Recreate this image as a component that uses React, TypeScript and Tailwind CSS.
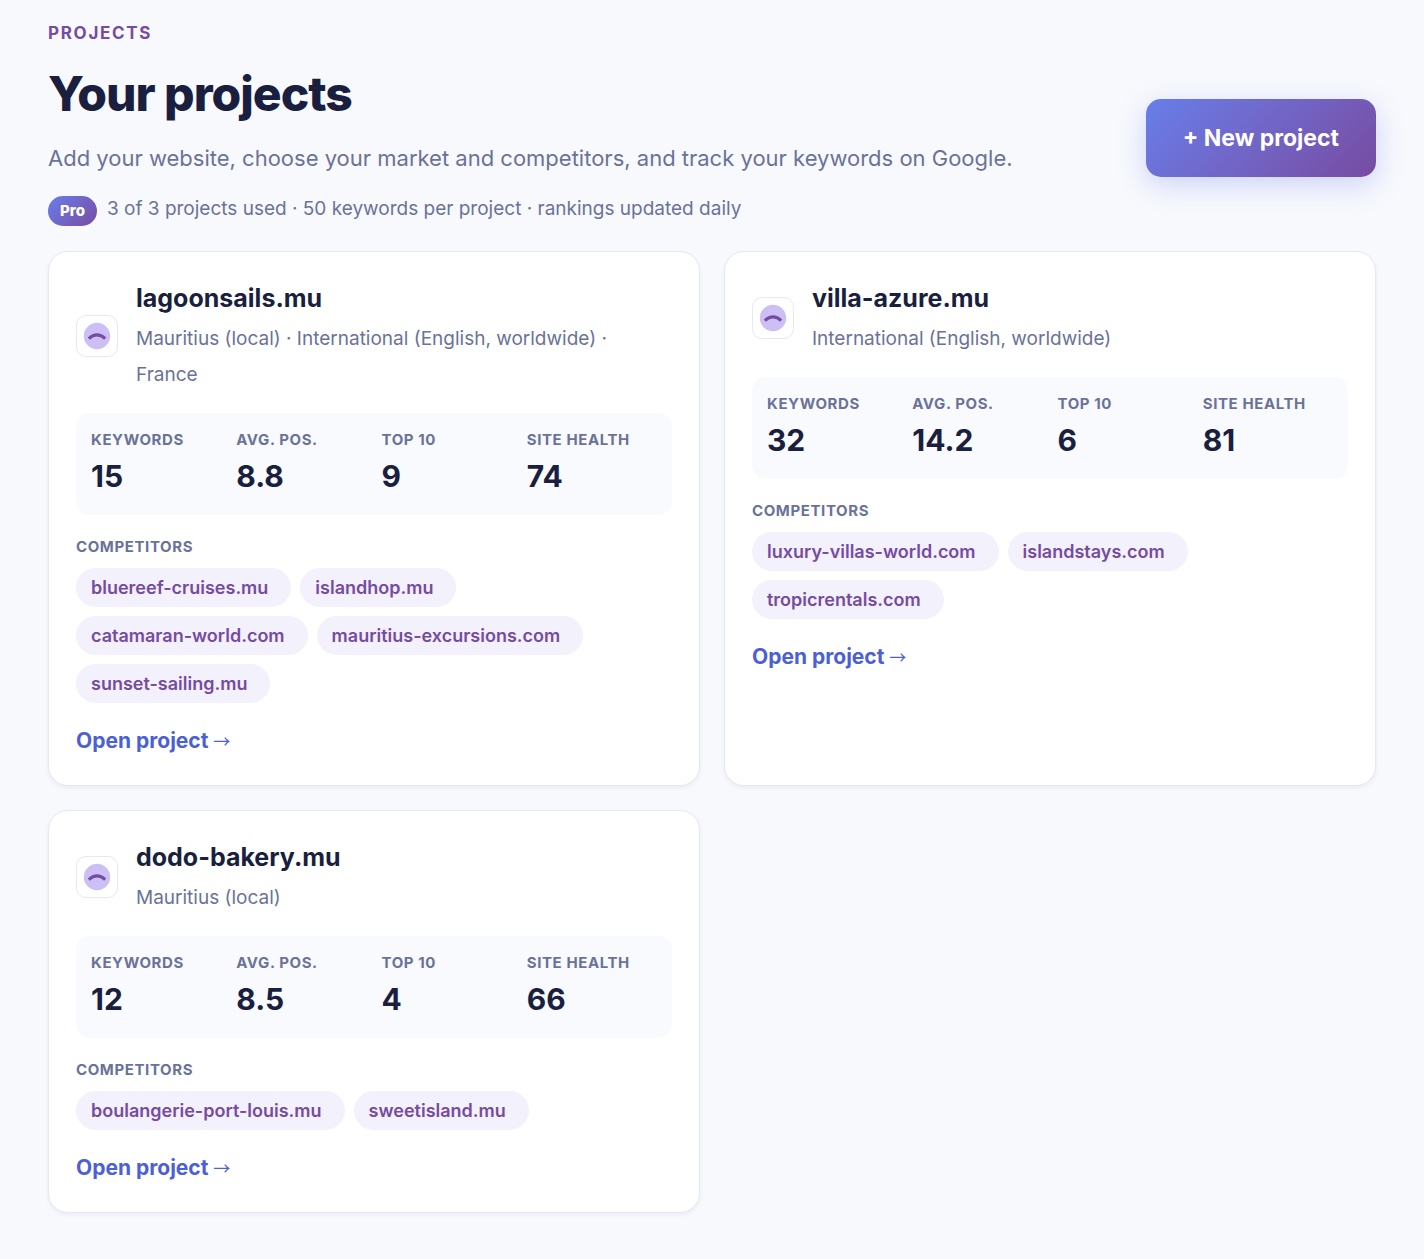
const projects = [
  {
    domain: "lagoonsails.mu",
    markets: "Mauritius (local) · International (English, worldwide) · France",
    stats: ["15", "8.8", "9", "74"],
    competitors: ["bluereef-cruises.mu", "islandhop.mu", "catamaran-world.com", "mauritius-excursions.com", "sunset-sailing.mu"],
  },
  {
    domain: "villa-azure.mu",
    markets: "International (English, worldwide)",
    stats: ["32", "14.2", "6", "81"],
    competitors: ["luxury-villas-world.com", "islandstays.com", "tropicrentals.com"],
  },
  {
    domain: "dodo-bakery.mu",
    markets: "Mauritius (local)",
    stats: ["12", "8.5", "4", "66"],
    competitors: ["boulangerie-port-louis.mu", "sweetisland.mu"],
  },
];

const labels = ["Keywords", "Avg. pos.", "Top 10", "Site health"];

type Project = (typeof projects)[number];

function SiteIcon() {
  return (
    <span className="flex size-[42px] shrink-0 items-center justify-center rounded-[10px] border border-[#e6e8f4] bg-white">
      <svg viewBox="0 0 28 28" className="size-7" aria-hidden="true">
        <circle cx="14" cy="14" r="13.2" fill="#cbbff5" />
        <path d="M5.8 16.6Q14 9.2 22.2 16.6" fill="none" stroke="#764ba2" strokeWidth="3" />
      </svg>
    </span>
  );
}

function ProjectCard({ project }: { project: Project }) {
  return (
    <article className="rounded-[20px] border border-[#e6e8f4] bg-white px-[27px] pt-[27px] pb-6 shadow-[0_2px_4px_rgba(26,31,60,0.06)]">
      <header className="flex items-center gap-[18px]">
        <SiteIcon />
        <div className="min-w-0">
          <h2 className="text-[25px] leading-[38px] font-bold">{project.domain}</h2>
          <p className="mt-1 text-[19px] leading-9 text-[#6b7299]">{project.markets}</p>
        </div>
      </header>
      <dl className="mt-5 grid grid-cols-4 gap-[15px] rounded-[14px] bg-[#f8fafe] px-[15px] pt-3 pb-[18px]">
        {labels.map((label, i) => (
          <div key={label}>
            <dt className="text-[15px] leading-[30px] font-bold tracking-[0.6px] whitespace-nowrap text-[#6b7299] uppercase">{label}</dt>
            <dd className="text-[30px] leading-[42px] font-bold">{project.stats[i]}</dd>
          </div>
        ))}
      </dl>
      <h3 className="mt-[17px] text-[15px] leading-[30px] font-bold tracking-[0.6px] text-[#6b7299] uppercase">Competitors</h3>
      <ul className="mt-1.5 flex flex-wrap gap-[9px]">
        {project.competitors.map((name) => (
          <li key={name} className="rounded-full bg-[#f3f1fb] pr-[23px] pl-[15px] text-[18px] leading-[39px] font-semibold text-[#764ba2]">
            {name}
          </li>
        ))}
      </ul>
      <a href="#" className="mt-[18px] inline-block text-[21px] leading-10 font-bold text-[#4c5fd5]">
        Open project <span className="font-['Noto_Sans_CJK_JP',sans-serif] text-[17px] leading-none font-normal">→</span>
      </a>
    </article>
  );
}

export default function App() {
  return (
    <main className="min-h-screen bg-[#f8f9fd] px-12 pt-[15px] pb-11 font-['Inter',sans-serif] text-[#1a1f40]">
      <header className="flex items-end justify-between gap-8">
        <div>
          <p className="text-[17px] leading-9 font-bold tracking-[1.7px] text-[#764ba2] uppercase">Projects</p>
          <h1 className="mt-[11px] text-[48px] leading-[64px] font-extrabold tracking-[-1px]">Your projects</h1>
          <p className="mt-[13px] text-[22px] leading-[38px] text-[#6b7299]">
            Add your website, choose your market and competitors, and track your keywords on Google.
          </p>
        </div>
        <button type="button" className="h-[78px] shrink-0 rounded-[15px] bg-linear-135 from-[#667eea] to-[#764ba2] px-[37px] text-[23px] font-bold text-white shadow-[0_8px_28px_rgba(102,126,234,0.3)]">
          + New project
        </button>
      </header>
      <div className="mt-[14px] flex items-center gap-[10px] text-[19px] leading-9 text-[#6b7299]">
        <span className="mt-1 rounded-full bg-linear-135 from-[#667eea] to-[#764ba2] px-3 text-[15px] leading-[30px] font-extrabold text-white">Pro</span>
        <p>3 of 3 projects used · 50 keywords per project · rankings updated daily</p>
      </div>
      <section className="mt-6 grid grid-cols-2 gap-6">
        {projects.map((project) => (
          <ProjectCard key={project.domain} project={project} />
        ))}
      </section>
    </main>
  );
}
